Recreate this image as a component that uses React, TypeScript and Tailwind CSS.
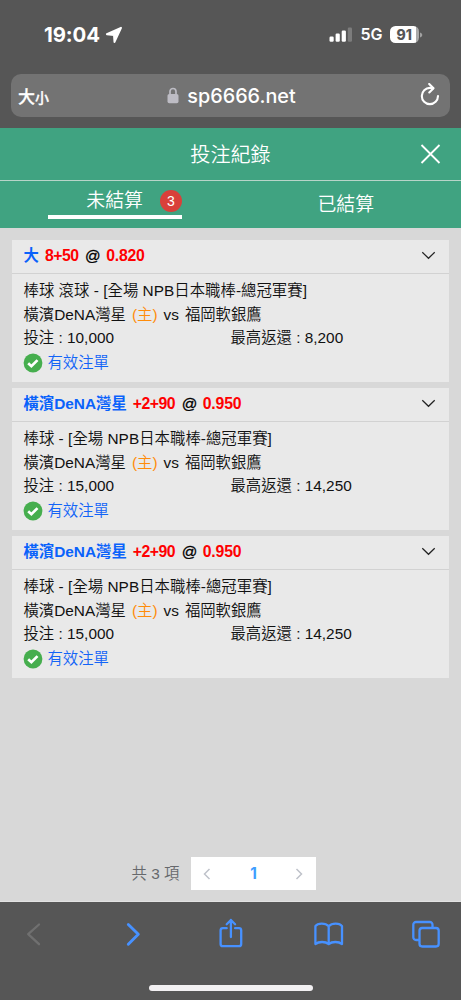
import type { ReactNode } from "react";

type Bet = {
  pick: string;
  line: string;
  odds: string;
  event: string;
  stake: string;
  payout: string;
};

const bets: Bet[] = [
  { pick: "大", line: "8+50", odds: "0.820", event: "棒球 滾球 - [全場 NPB日本職棒-總冠軍賽]", stake: "10,000", payout: "8,200" },
  { pick: "橫濱DeNA灣星", line: "+2+90", odds: "0.950", event: "棒球 - [全場 NPB日本職棒-總冠軍賽]", stake: "15,000", payout: "14,250" },
  { pick: "橫濱DeNA灣星", line: "+2+90", odds: "0.950", event: "棒球 - [全場 NPB日本職棒-總冠軍賽]", stake: "15,000", payout: "14,250" },
];

function StatusBar() {
  return (
    <div className="flex h-[74px] items-start justify-between pr-[38px] pl-[44px] pt-[22px] font-['Inter',sans-serif] text-white">
      <div className="flex h-[25px] items-center">
        <span className="text-[20.4px] font-bold leading-[25px] tracking-[-0.1px]">19:04</span>
        <svg className="ml-[5px]" width="18" height="18" viewBox="0 0 18 18" fill="#fff" stroke="#fff" strokeWidth="2" strokeLinejoin="round">
          <path d="M16 1.800 1.900 8.200 9 9l.5 6.900Z" />
        </svg>
      </div>
      <div className="flex h-[25px] items-center">
        <svg width="24" height="16" viewBox="0 0 24 16" fill="#fff">
          <rect x="0.5" y="9.5" width="4.2" height="5.2" rx="1.2" />
          <rect x="6.6" y="6.6" width="4.2" height="8.1" rx="1.2" />
          <rect x="12.7" y="3.5" width="4.2" height="11.2" rx="1.2" />
          <rect x="18.8" y="0.6" width="4.2" height="14.1" rx="1.2" fill="#7c7c7c" />
        </svg>
        <span className="ml-[7px] text-[16px] font-semibold leading-[25px]">5G</span>
        <div className="ml-[7px] flex h-[17px] w-[29.5px] items-center justify-center rounded-[5.5px] bg-[linear-gradient(90deg,#fff_91%,#aaa_91%)] text-[14px] font-extrabold leading-none text-[#565656]">
          91
        </div>
        <svg className="ml-px" width="3" height="6" viewBox="0 0 3 6" fill="#a0a0a0">
          <path d="M0 .5C3 1.5 3 4.5 0 5.5Z" />
        </svg>
      </div>
    </div>
  );
}

function AddressBar() {
  return (
    <div className="mr-[11px] ml-[11px] grid h-[42.5px] grid-cols-[1fr_auto_1fr] items-center rounded-[10px] bg-[#737373] text-white">
      <div className="flex items-baseline pt-[2px] pl-[7px] font-['Noto_Sans_CJK_TC',sans-serif] font-medium leading-[24px] [-webkit-text-stroke:0.3px_white]">
        <span className="text-[17px]">大</span>
        <span className="text-[14px]">小</span>
      </div>
      <div className="flex items-center pl-[2px]">
        <svg width="12" height="17" viewBox="0 0 12 17">
          <path d="M3 8V4.5a3 3 0 0 1 6 0V8" fill="none" stroke="#bdbcc4" strokeWidth="1.7" />
          <rect x="0.5" y="7" width="11" height="9.3" rx="1.8" fill="#bdbcc4" />
        </svg>
        <span className="mt-px ml-[8px] font-['Inter',sans-serif] text-[19.8px] leading-[24px] font-medium">sp6666.net</span>
      </div>
      <div className="flex justify-end pr-[9px]">
        <svg width="22" height="24" viewBox="0 0 22 24" fill="none" stroke="#fff" strokeWidth="2.1" strokeLinecap="round" strokeLinejoin="round">
          <path d="M19 13a8.1 8.1 0 1 1-8-8.1c1 0 2 .1 3 .4" />
          <path d="m10.2 1 4.3 4.3-4.2 4.2" />
        </svg>
      </div>
    </div>
  );
}

function CheckBadge() {
  return (
    <svg width="20" height="20" viewBox="0 0 20 20">
      <circle cx="10" cy="10" r="9.4" fill="#46ae4e" />
      <path d="m5.2 10.2 3.2 3 6.1-6.1" fill="none" stroke="#fff" strokeWidth="2.7" />
    </svg>
  );
}

function BetCard({ bet }: { bet: Bet }) {
  return (
    <article className="h-[142px] bg-[#e9e9e9] text-[15.37px] text-[#111]">
      <header className="flex h-[34px] items-center justify-between border-b-[1.5px] border-[#d2d2d2] pr-[13px] pl-[11.5px] font-bold">
        <div className="flex pb-[2px] leading-[24px]">
          <span className="text-[#0a62fb]">{bet.pick}</span>
          <span className="ml-[6px] text-[15.8px] tracking-[-0.48px] text-[#f00]">{bet.line}</span>
          <span className="ml-[6.5px] font-normal text-black [-webkit-text-stroke:0.3px_black]">@</span>
          <span className="ml-[5.5px] text-[15.8px] tracking-[-0.2px] text-[#f00]">{bet.odds}</span>
        </div>
        <svg className="mb-[2px]" width="15" height="9" viewBox="0 0 15 9" fill="none" stroke="#222" strokeWidth="1.2">
          <path d="m1.3 1.2 6.2 6.1 6.2-6.1" />
        </svg>
      </header>
      <div className="flex flex-col pt-[5px] pl-[11.5px] leading-[23.5px] font-[350]">
        <div className="tracking-[0.04px]">{bet.event}</div>
        <div className="flex">
          <span>橫濱DeNA灣星</span>
          <span className="ml-[6px] text-[#ff8c0a]">(主)</span>
          <span className="ml-[6px]">vs</span>
          <span className="ml-[6px]">福岡軟銀鷹</span>
        </div>
        <div className="grid grid-cols-[207px_1fr]">
          <span>投注 : {bet.stake}</span>
          <span>最高返還 : {bet.payout}</span>
        </div>
        <div className="flex h-[27px] items-center text-[#1264f7]">
          <span className="-ml-[1px]"><CheckBadge /></span>
          <span className="ml-[5px]">有效注單</span>
        </div>
      </div>
    </article>
  );
}

function NavIcon({ children, dim }: { children: ReactNode; dim?: boolean }) {
  return (
    <svg className={dim ? "text-[#707070]" : "text-[#4791ff]"} width="32" height="34" viewBox="0 0 32 34" fill="none" stroke="currentColor" strokeWidth="2.3" strokeLinecap="round" strokeLinejoin="round">
      {children}
    </svg>
  );
}

export default function App() {
  return (
    <div className="flex h-[1000px] w-[461px] flex-col overflow-hidden bg-[#565656] font-['Liberation_Sans','Noto_Sans_CJK_TC',sans-serif]">
      <div className="h-[128px] shrink-0">
        <StatusBar />
        <AddressBar />
      </div>
      <div className="h-[100px] shrink-0 bg-[#40a381] text-white">
        <div className="grid h-[53px] grid-cols-[1fr_auto_1fr] items-center border-b border-[#b8d4c9]">
          <h1 className="col-start-2 pt-px text-[20.1px] leading-[26px] font-[350]">投注紀錄</h1>
          <svg className="mr-[20px] justify-self-end" width="21" height="21" viewBox="0 0 21 21" fill="none" stroke="#fff" strokeWidth="1.8">
            <path d="m1.5 1 18 18M19.5 1l-18 18" />
          </svg>
        </div>
        <div className="grid h-[47px] grid-cols-2 text-[18.9px] font-[350]">
          <div className="flex justify-center">
            <div className="flex h-[38px] w-[134px] items-center border-b-4 border-white pt-[6px] pl-[38px]">
              <span className="leading-[24px]">未結算</span>
              <span className="ml-[17px] flex size-[22px] items-center justify-center rounded-full bg-[#d9403a] text-[14px] leading-none">3</span>
            </div>
          </div>
          <div className="flex h-[48px] items-center justify-center">已結算</div>
        </div>
      </div>
      <main className="flex h-[674px] shrink-0 flex-col border-b border-[#e2e2e2] bg-[#d8d8d8] px-[12px] pt-[12px]">
        <div className="flex flex-col gap-[6px]">
          {bets.map((bet, i) => (
            <BetCard key={i} bet={bet} />
          ))}
        </div>
        <div className="mt-auto mb-[11px] flex items-center pl-[119.5px]">
          <span className="w-[59.5px] text-[15.37px] font-[350] text-[#66686c]">共 3 項</span>
          <div className="grid h-[33px] w-[125px] grid-cols-3 place-items-center bg-white">
            <svg className="mr-[9px]" width="8" height="12" viewBox="0 0 8 12" fill="none" stroke="#bfc2ca" strokeWidth="1.5">
              <path d="M6.5 1 1.5 6l5 5" />
            </svg>
            <span className="font-['Inter',sans-serif] text-[15.37px] font-bold text-[#409eff]">1</span>
            <svg className="ml-[8px]" width="8" height="12" viewBox="0 0 8 12" fill="none" stroke="#bfc2ca" strokeWidth="1.5">
              <path d="m1.5 1 5 5-5 5" />
            </svg>
          </div>
        </div>
      </main>
      <footer className="flex h-[98px] shrink-0 flex-col items-center justify-between pt-[15px] pb-[9px]">
        <div className="flex w-full justify-between pr-[18px] pl-[18px]">
          <NavIcon dim><path d="M21 7.5 10.2 17.2 21 27.2" /></NavIcon>
          <NavIcon><path strokeWidth="2.9" d="M12.3 7.5 22.300 17.2 12.300 27.2" /></NavIcon>
          <NavIcon>
            <path d="M11.7 11.2H7.800a2.2 2.2 0 0 0-2.2 2.2v13.5a2.2 2.2 0 0 0 2.2 2.2h16.2a2.2 2.2 0 0 0 2.2-2.2V13.4a2.2 2.2 0 0 0-2.2-2.2h-3.9M15.900 20V3M11.7 7.2 15.900 3l4.2 4.2" />
          </NavIcon>
          <NavIcon>
            <path d="M15.700 9.2C12.500 5.7 4.700 5.7 2.400 9.2v17.9c3.3-2.8 10-2.8 13.3 0 3.3-2.8 10-2.8 13.3 0V9.2C26.700 5.7 18.900 5.7 15.700 9.2Zm0 0v17.9" />
          </NavIcon>
          <NavIcon>
            <path d="M8 23H5A2.7 2.7 0 0 1 2.300 20.3V7.7A2.7 2.7 0 0 1 5 5h13.8a2.7 2.7 0 0 1 2.7 2.7v3.2" />
            <rect x="8.500" y="11" width="19.2" height="18.500" rx="2.700" />
          </NavIcon>
        </div>
        <div className="h-[6px] w-[164px] rounded-full bg-[#f2f0f2]" />
      </footer>
    </div>
  );
}
